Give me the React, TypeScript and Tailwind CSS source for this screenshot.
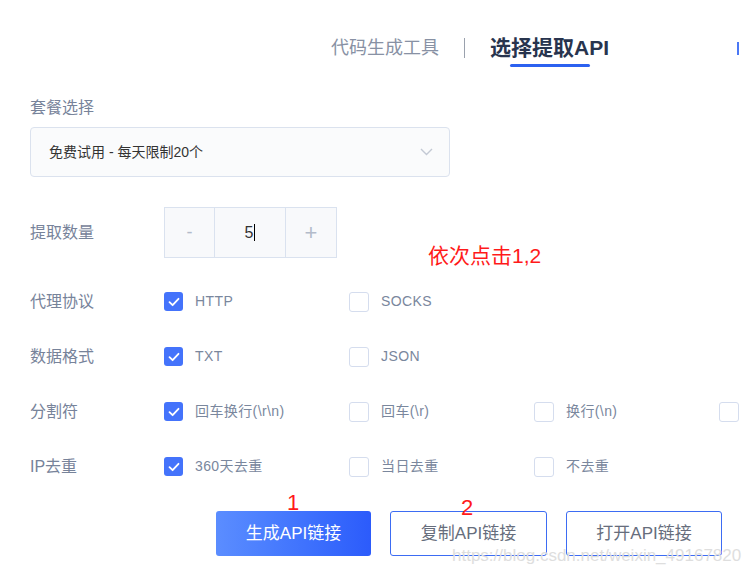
import React from 'react';

const labelCls = 'w-[134px] shrink-0 text-[16px] text-[#77839a]';

function Check({ checked }: { checked?: boolean }) {
  if (checked) {
    return (
      <span className="flex h-[19px] w-[19px] shrink-0 items-center justify-center rounded-[3px] bg-[#4473fb]">
        <svg width="12" height="10" viewBox="0 0 12 10" fill="none">
          <path d="M1.5 5.2 4.6 8.2 10.5 1.8" stroke="white" strokeWidth="1.8" strokeLinecap="round" strokeLinejoin="round" />
        </svg>
      </span>
    );
  }
  return <span className="h-[20px] w-[20px] shrink-0 rounded-[3px] border border-[#d5ddee] bg-white" />;
}

function Option({ label, checked }: { label?: string; checked?: boolean }) {
  return (
    <div className="flex w-[185px] shrink-0 items-center gap-[12px]">
      <Check checked={checked} />
      {label && <span className="text-[14px] tracking-[0.4px] text-[#7a879d]">{label}</span>}
    </div>
  );
}

function OptionRow({ title, options }: { title: string; options: { label?: string; checked?: boolean }[] }) {
  return (
    <div className="flex h-[55px] items-center">
      <div className={labelCls}>{title}</div>
      <div className="flex">
        {options.map((o, i) => (
          <Option key={i} label={o.label} checked={o.checked} />
        ))}
      </div>
    </div>
  );
}

const btnCls = 'flex h-[45px] shrink-0 items-center justify-center rounded-[3px] text-[17px]';

export default function App() {
  return (
    <div className="relative h-[575px] w-[742px] overflow-hidden bg-white font-['Liberation_Sans','Noto_Sans_CJK_SC',sans-serif]">
      {/* tabs */}
      <div className="flex items-start pl-[331px] pt-[35px]">
        <span className="text-[18px] leading-[26px] text-[#8891a4]">代码生成工具</span>
        <span className="mx-[25px] mt-[3px] h-[20px] w-px bg-[#9aa1ad]" />
        <div className="flex flex-col items-center">
          <span className="text-[21px] font-bold leading-[26px] text-[#28344e]">选择提取API</span>
          <span className="mt-[3px] h-[3px] w-[80px] rounded-full bg-[#2b61f0]" />
        </div>
        <span className="ml-auto mr-[3px] mt-[7px] h-[13px] w-[2px] bg-[#4b78f5]" />
      </div>

      <div className="px-[30px]">
        <div className="mt-[29px] text-[16px] leading-[24px] text-[#77839a]">套餐选择</div>
        <div className="mt-[7px] flex h-[50px] w-[420px] items-center justify-between rounded-[4px] border border-[#dbe2ee] bg-[#fafbfc] pl-[18px] pr-[16px]">
          <span className="text-[14px] text-[#333333]">免费试用 - 每天限制20个</span>
          <svg width="13" height="8" viewBox="0 0 13 8" fill="none">
            <path d="M1 1l5.5 5.5L12 1" stroke="#c3c9d4" strokeWidth="1.4" />
          </svg>
        </div>

        <div className="mt-[30px] flex items-center">
          <div className={labelCls}>提取数量</div>
          <div className="flex h-[51px] border border-[#dae2ef] bg-[#f8f9fb]">
            <div className="flex w-[49px] items-center justify-center text-[18px] text-[#b3bbca]">-</div>
            <div className="flex w-[72px] items-center justify-center border-x border-[#dae2ef] text-[16px] text-[#333333]">
              5<span className="ml-px h-[17px] w-px bg-black" />
            </div>
            <div className="flex w-[50px] items-center justify-center text-[22px] font-light text-[#b3bbca]">+</div>
          </div>
        </div>

        <div className="mt-[16px]">
          <OptionRow title="代理协议" options={[{ label: 'HTTP', checked: true }, { label: 'SOCKS' }]} />
          <OptionRow title="数据格式" options={[{ label: 'TXT', checked: true }, { label: 'JSON' }]} />
          <OptionRow
            title="分割符"
            options={[{ label: '回车换行(\\r\\n)', checked: true }, { label: '回车(\\r)' }, { label: '换行(\\n)' }, { label: '' }]}
          />
          <OptionRow title="IP去重" options={[{ label: '360天去重', checked: true }, { label: '当日去重' }, { label: '不去重' }]} />
        </div>

        <div className="ml-[186px] mt-[17px] flex gap-[19px]">
          <button className={`${btnCls} w-[155px] bg-gradient-to-r from-[#5b8dff] to-[#2c5bfb] text-white`}>生成API链接</button>
          <button className={`${btnCls} w-[157px] border border-[#3d6cf3] bg-white text-[#666d7c]`}>复制API链接</button>
          <button className={`${btnCls} w-[156px] border border-[#3d6cf3] bg-white text-[#666d7c]`}>打开API链接</button>
        </div>
      </div>

      {/* annotations over the screenshot */}
      <span className="absolute left-[428px] top-[243px] text-[21px] leading-[26px] text-[#ff1a1a]">依次点击1,2</span>
      <span className="absolute left-[287px] top-[491px] text-[22px] leading-[24px] text-[#ff1a1a]">1</span>
      <span className="absolute left-[461px] top-[496px] text-[22px] leading-[24px] text-[#ff1a1a]">2</span>
      <span className="absolute left-[452px] top-[545px] text-[17px] leading-[22px] text-[#dedede]">
        https://blog.csdn.net/weixin_49167820
      </span>
    </div>
  );
}
